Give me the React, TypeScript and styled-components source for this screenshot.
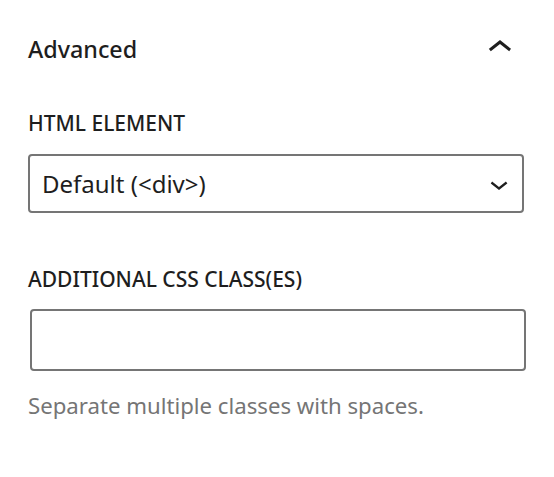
import styled, { createGlobalStyle } from 'styled-components';

const GlobalStyle = createGlobalStyle`
    body {
        margin: 0;
        background: #ffffff;
        font-family: "Noto Sans", "Open Sans", sans-serif;
        color: #1e1e1e;
    }
`;

const Panel = styled.div`
    display: flex;
    flex-direction: column;
    padding: 0 30px 40px 28px;
`;

const PanelHeader = styled.div`
    display: flex;
    align-items: flex-start;
    justify-content: space-between;
    padding-top: 24px;
`;

const PanelTitle = styled.h2`
    margin: 9px 0 0;
    font-size: 23.3px;
    line-height: 32px;
    font-weight: 500;
`;

const ToggleIcon = styled.svg`
    width: 48px;
    height: 48px;
    margin-bottom: -7px;
`;

const Field = styled.div<{ $top: number }>`
    display: flex;
    flex-direction: column;
    margin-top: ${(p) => p.$top}px;
`;

const Label = styled.label`
    font-size: 21px;
    line-height: 28px;
    font-weight: 500;
    text-transform: uppercase;
`;

const SelectWrap = styled.div`
    position: relative;
    margin-top: 17px;
`;

const Select = styled.select`
    appearance: none;
    width: 100%;
    height: 59px;
    box-sizing: border-box;
    border: 2px solid #757575;
    border-radius: 4px;
    background: #ffffff;
    padding: 0 48px 0 12px;
    font-family: inherit;
    font-size: 24px;
    color: #1e1e1e;
`;

const SelectIcon = styled.svg`
    position: absolute;
    right: 7px;
    top: 12px;
    width: 36px;
    height: 36px;
    pointer-events: none;
`;

const TextInput = styled.input`
    margin: 16px -2px 0 2px;
    height: 62px;
    box-sizing: border-box;
    border: 2px solid #757575;
    border-radius: 4px;
    padding: 0 12px;
    font-family: inherit;
    font-size: 24px;
`;

const Help = styled.p`
    margin: 20px 0 0;
    font-size: 22.2px;
    line-height: 30px;
    color: #757575;
`;

const App = () => {
    return (
        <>
            <GlobalStyle />
            <Panel>
                <PanelHeader>
                    <PanelTitle>Advanced</PanelTitle>
                    <ToggleIcon viewBox='0 0 24 24'>
                        <path d='M6.5 12.4L12 8l5.5 4.4-.9 1.2L12 10l-4.6 3.6-1-1.2z' fill='#1e1e1e' />
                    </ToggleIcon>
                </PanelHeader>
                <Field $top={44}>
                    <Label>HTML element</Label>
                    <SelectWrap>
                        <Select defaultValue='div'>
                            <option value='div'>Default (&lt;div&gt;)</option>
                            <option value='header'>&lt;header&gt;</option>
                            <option value='main'>&lt;main&gt;</option>
                            <option value='section'>&lt;section&gt;</option>
                        </Select>
                        <SelectIcon viewBox='0 0 24 24'>
                            <path d='M17.5 11.6L12 16l-5.5-4.4.9-1.2L12 14l4.6-3.6 1 1.2z' fill='#1e1e1e' />
                        </SelectIcon>
                    </SelectWrap>
                </Field>
                <Field $top={52}>
                    <Label>Additional CSS class(es)</Label>
                    <TextInput type='text' />
                    <Help>Separate multiple classes with spaces.</Help>
                </Field>
            </Panel>
        </>
    );
};

export default App;
